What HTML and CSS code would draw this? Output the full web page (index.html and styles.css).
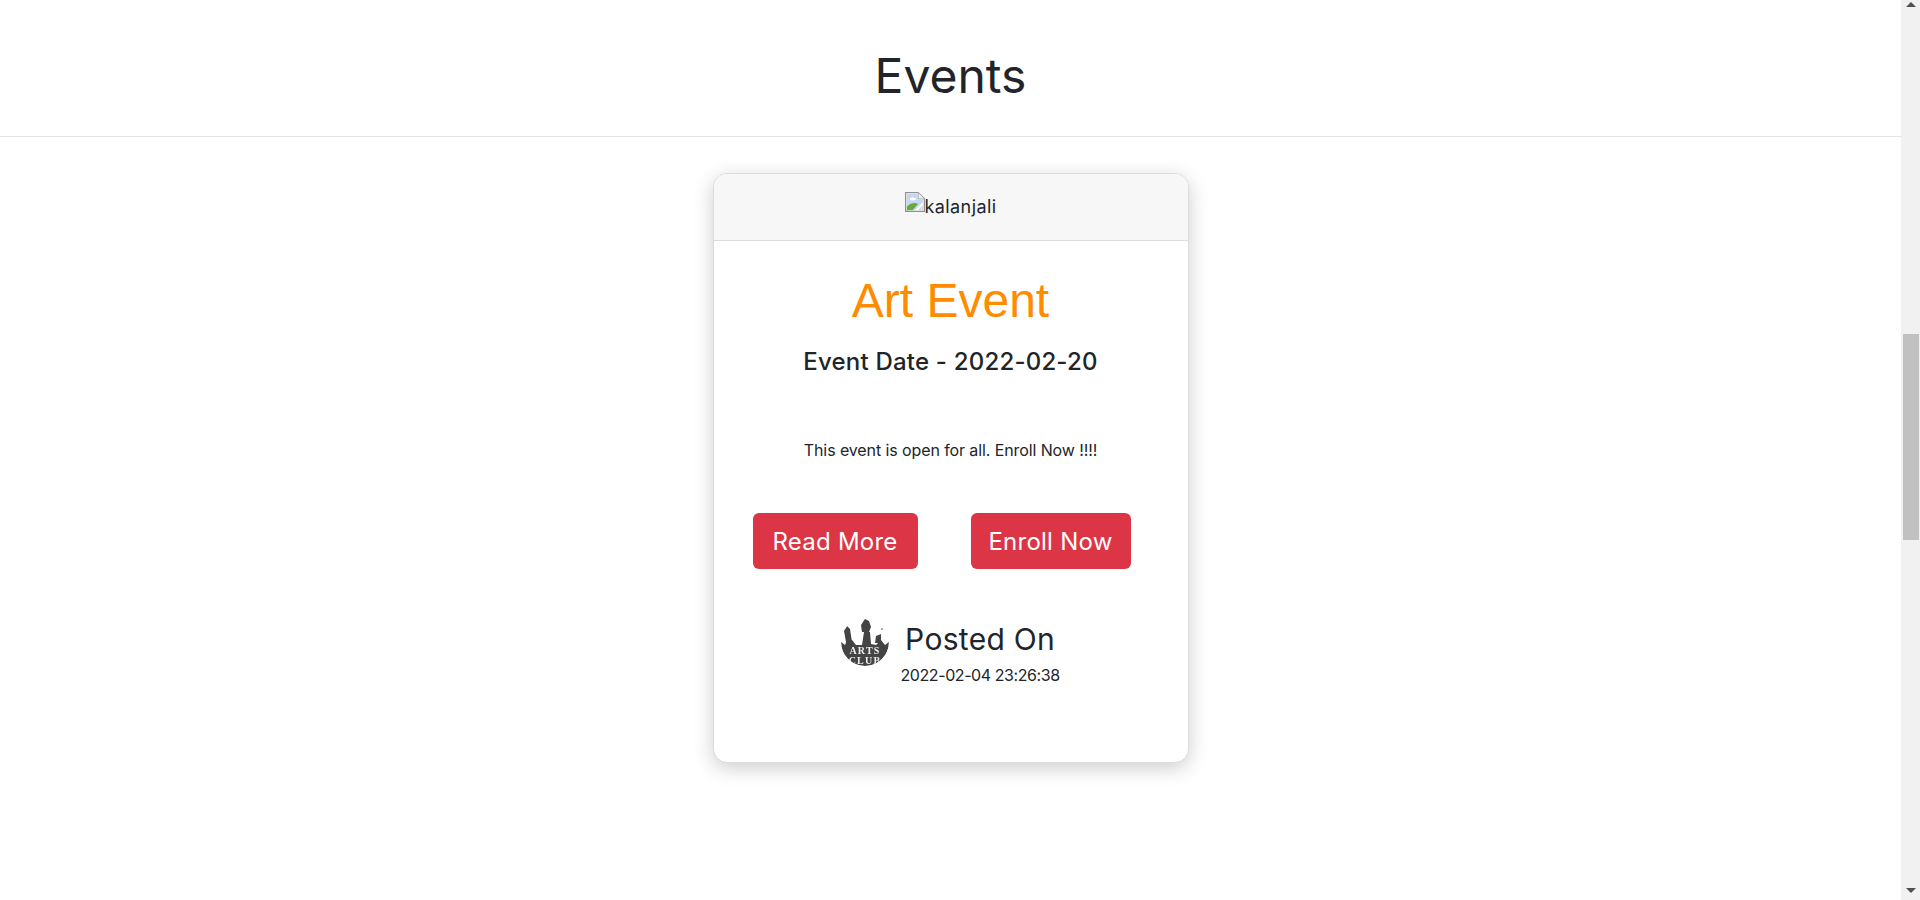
FILE: index.html
```html
<!DOCTYPE html>
<html lang="en">
<head>
  <meta charset="UTF-8">
  <meta name="viewport" content="width=device-width, initial-scale=1.0">
  <title>Events</title>
  <link rel="stylesheet" href="styles.css">
</head>
<body>
  <div class="page">
    <h1 class="title">Events</h1>
    <div class="card">
      <div class="card-header">
        <svg class="broken" viewBox="0 0 16 16" width="20" height="20">
          <path d="M0.5 0.5H10.5L15.5 5.5V15.5H0.5Z" fill="#fff" stroke="#8f8f8f"/>
          <path d="M10.5 0.5V5.5H15.5" fill="#f1f1f1" stroke="#b5b5b5"/>
          <path d="M1.5 1.5H10V6H14.5V8L8 14.5H1.5Z" fill="#c6d7f5"/>
          <path d="M4 5Q6 3.5 8 5Q10 6 8 6.500H4Z" fill="#fff"/>
          <path d="M1.500 14.500V11.500Q6 7.500 10.500 9.500L6 14.500Z" fill="#64ab3c"/>
          <path d="M10 14.500L14.500 10V14.500Z" fill="#dcdcdc"/>
        </svg><span class="broken-alt">kalanjali</span>
      </div>
      <div class="card-body">
        <h2 class="event-name">Art Event</h2>
        <h5 class="event-date">Event Date - 2022-02-20</h5>
        <p class="event-text">This event is open for all. Enroll Now !!!!</p>
        <div class="buttons">
          <a class="btn btn-read">Read More</a>
          <a class="btn btn-enroll">Enroll Now</a>
        </div>
        <div class="posted">
          <svg class="logo" viewBox="0 0 48 48" width="48" height="48">
            <path d="M0 24A24 24 0 0 0 48 24L44 27L40 22L35 27L30 26L29 14L23 14L21 27L15 27L11 22L6 22L4 27Z" fill="#444"/>
            <path d="M5 24L3 13L6 8L9 11L11 24Z" fill="#444"/>
            <path d="M21 14L20 7L24 1L28 3L30 9L28 14Z" fill="#444"/>
            <path d="M34 25L35 18L40 16L40 25Z" fill="#444"/>
            <rect x="40" y="10" width="2" height="2" fill="#aaa"/>
            <text class="logo-text" x="24" y="36">ARTS</text>
            <text class="logo-text" x="24" y="46">CLUB</text>
          </svg>
          <div class="posted-info">
            <div class="posted-label">Posted On</div>
            <div class="posted-date">2022-02-04 23:26:38</div>
          </div>
        </div>
      </div>
    </div>
  </div>
  <div class="scrollbar">
    <span class="arrow-up"></span>
    <div class="track"><div class="thumb"></div></div>
    <span class="arrow-down"></span>
  </div>
</body>
</html>
```

FILE: styles.css
```css
html, body {
  height: 100%;
}
body {
  margin: 0;
  display: flex;
  overflow: hidden;
  font-family: 'Inter', 'Noto Sans', sans-serif;
  color: #212529;
  background: #fff;
}
.page {
  flex: 1;
  min-width: 0;
}
.title {
  margin: 0;
  height: 136px;
  line-height: 152px;
  text-align: center;
  font-size: 48px;
  font-weight: 400;
  border-bottom: 1px solid #e2e2e2;
}
.card {
  width: 476px;
  height: 590px;
  margin: 36px auto 0;
  box-sizing: border-box;
  border: 1px solid #dcdcdc;
  border-radius: 14px;
  background: #fff;
  box-shadow: 0 5px 20px rgba(0, 0, 0, 0.2);
  overflow: hidden;
}
.card-header {
  height: 67px;
  box-sizing: border-box;
  padding-top: 18px;
  display: flex;
  justify-content: center;
  align-items: flex-start;
  background: #f7f7f7;
  border-bottom: 1px solid #dcdcdc;
}
.broken-alt {
  margin-top: 3px;
  font-size: 18px;
  line-height: 24px;
  letter-spacing: 0.4px;
}
.card-body {
  display: flex;
  flex-direction: column;
  align-items: center;
}
.event-name {
  margin: 31px 0 0;
  font-family: 'Liberation Sans', Arial, sans-serif;
  font-size: 48px;
  font-weight: 400;
  line-height: 58px;
  color: #ff8c00;
}
.event-date {
  margin: 14px 0 0;
  font-size: 24px;
  font-weight: 500;
  line-height: 36px;
  letter-spacing: 0.2px;
}
.event-text {
  margin: 58px 0 0;
  font-size: 16px;
  line-height: 24px;
  letter-spacing: -0.1px;
}
.buttons {
  align-self: flex-start;
  margin: 51px 0 0 39px;
  display: flex;
  gap: 53px;
}
.btn {
  height: 56px;
  display: flex;
  align-items: center;
  justify-content: center;
  border-radius: 6px;
  background: #dc3545;
  color: #fff;
  font-size: 24px;
  letter-spacing: 0.25px;
}
.btn-read {
  width: 165px;
}
.btn-enroll {
  width: 160px;
}
.posted {
  align-self: flex-start;
  margin: 49px 0 0 127px;
  display: flex;
  align-items: flex-start;
}
.logo {
  display: block;
  border-radius: 50%;
  filter: blur(0.4px);
}
.logo-text {
  font-family: 'Liberation Serif', serif;
  font-size: 10px;
  font-weight: 700;
  letter-spacing: 1.2px;
  fill: #eee;
  text-anchor: middle;
}
.posted-info {
  margin-left: 12px;
  padding-top: 1px;
  text-align: center;
}
.posted-label {
  font-size: 30px;
  line-height: 40px;
  letter-spacing: 0.3px;
}
.posted-date {
  margin-top: 4px;
  font-size: 16px;
  line-height: 24px;
  letter-spacing: -0.42px;
}
.scrollbar {
  width: 19px;
  flex: none;
  background: #f1f1f1;
  display: flex;
  flex-direction: column;
  align-items: center;
}
.arrow-up, .arrow-down {
  width: 0;
  height: 0;
  flex: none;
  border-left: 5px solid transparent;
  border-right: 5px solid transparent;
}
.arrow-up {
  margin: 2px 0 5px;
  border-bottom: 5px solid #505050;
}
.arrow-down {
  margin: 5px 0 7px;
  border-top: 5px solid #505050;
}
.track {
  flex: 1;
  width: 100%;
  padding-top: 322px;
  box-sizing: border-box;
}
.thumb {
  height: 206px;
  margin: 0 1px 0 2px;
  background: #c1c1c1;
}
```
